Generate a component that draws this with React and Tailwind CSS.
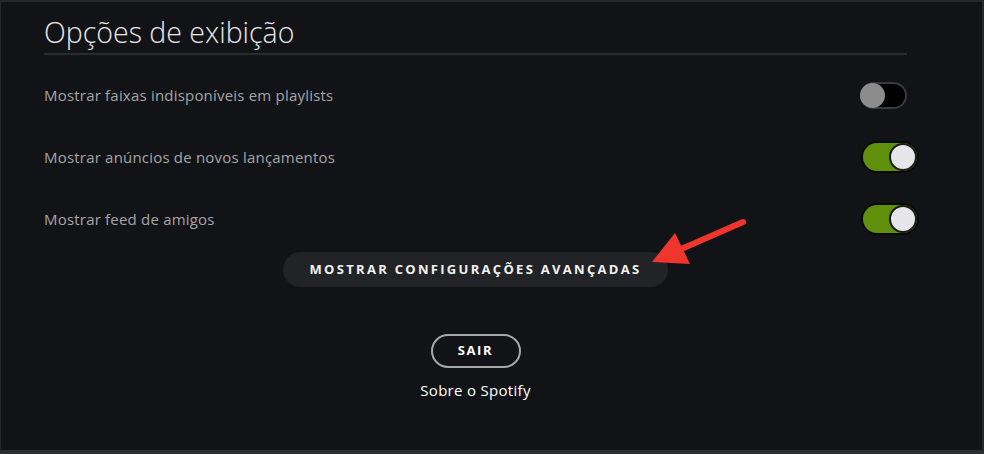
import React from 'react';

const rows = [
  { label: 'Mostrar faixas indisponíveis em playlists', on: false },
  { label: 'Mostrar anúncios de novos lançamentos', on: true },
  { label: 'Mostrar feed de amigos', on: true },
];

const Toggle = ({ on }) => {
  if (!on) {
    return (
      <div className="w-[47px] h-[27px] rounded-full bg-black border-2 border-[#3a3a3a] flex items-center">
        <div className="w-[25px] h-[25px] -ml-[2px] rounded-full bg-[#8c8c8c]" />
      </div>
    );
  }
  return (
    <div className="w-[54px] h-[28px] rounded-full bg-[#5f8f0b] flex items-center justify-end mr-[-10px] shadow-[0_0_0_2px_#0a0a0a]">
      <div className="w-[28px] h-[28px] rounded-full bg-[#e6e6ea] border-2 border-[#1a1a1a]" />
    </div>
  );
};

const App = () => {
  return (
    <div
      className="w-[984px] h-[454px] bg-[#121316] border-t-2 border-l border-r-2 border-[#26272a] border-b-4 border-b-[#2c2d2f] overflow-hidden relative"
      style={{ fontFamily: '"Open Sans", "Liberation Sans", sans-serif' }}
    >
      <div className="pl-[43px] pr-[75px] pt-[12px]">
        <h1 className="text-[28.5px] font-light text-[#e8e8ea] leading-[36px] pb-[3px] border-b-2 border-[#2b2c2f]">
          Opções de exibição
        </h1>
        <div className="pt-[11px]">
          {rows.map((r) => (
            <div key={r.label} className="h-[62px] flex items-center justify-between pb-[4px]">
              <span className="text-[15px] tracking-[0.2px] text-[#a5a5a8]">{r.label}</span>
              <Toggle on={r.on} />
            </div>
          ))}
        </div>
      </div>
      <div className="flex flex-col items-center pr-[32px]">
        <div className="relative">
          <button className="h-[35px] px-[27px] rounded-full bg-[#222327] text-[13px] font-bold tracking-[2.3px] text-[#f2f2f2]">
            MOSTRAR CONFIGURAÇÕES AVANÇADAS
          </button>
          <svg
            className="absolute left-[360px] -top-[40px]"
            width="104"
            height="60"
            viewBox="0 0 104 60"
          >
            <line x1="100" y1="10" x2="36" y2="38" stroke="#f0362c" strokeWidth="6" strokeLinecap="round" />
            <polygon points="9,50 32,21 47,52" fill="#f0362c" />
          </svg>
        </div>
        <button className="mt-[47px] h-[34px] w-[90px] rounded-full border-2 border-[#a8a8aa] text-[13px] font-bold tracking-[0.12em] text-white">
          SAIR
        </button>
        <div className="mt-[11px] text-[15px] tracking-[0.3px] text-white">Sobre o Spotify</div>
      </div>
    </div>
  );
};

export default App;
